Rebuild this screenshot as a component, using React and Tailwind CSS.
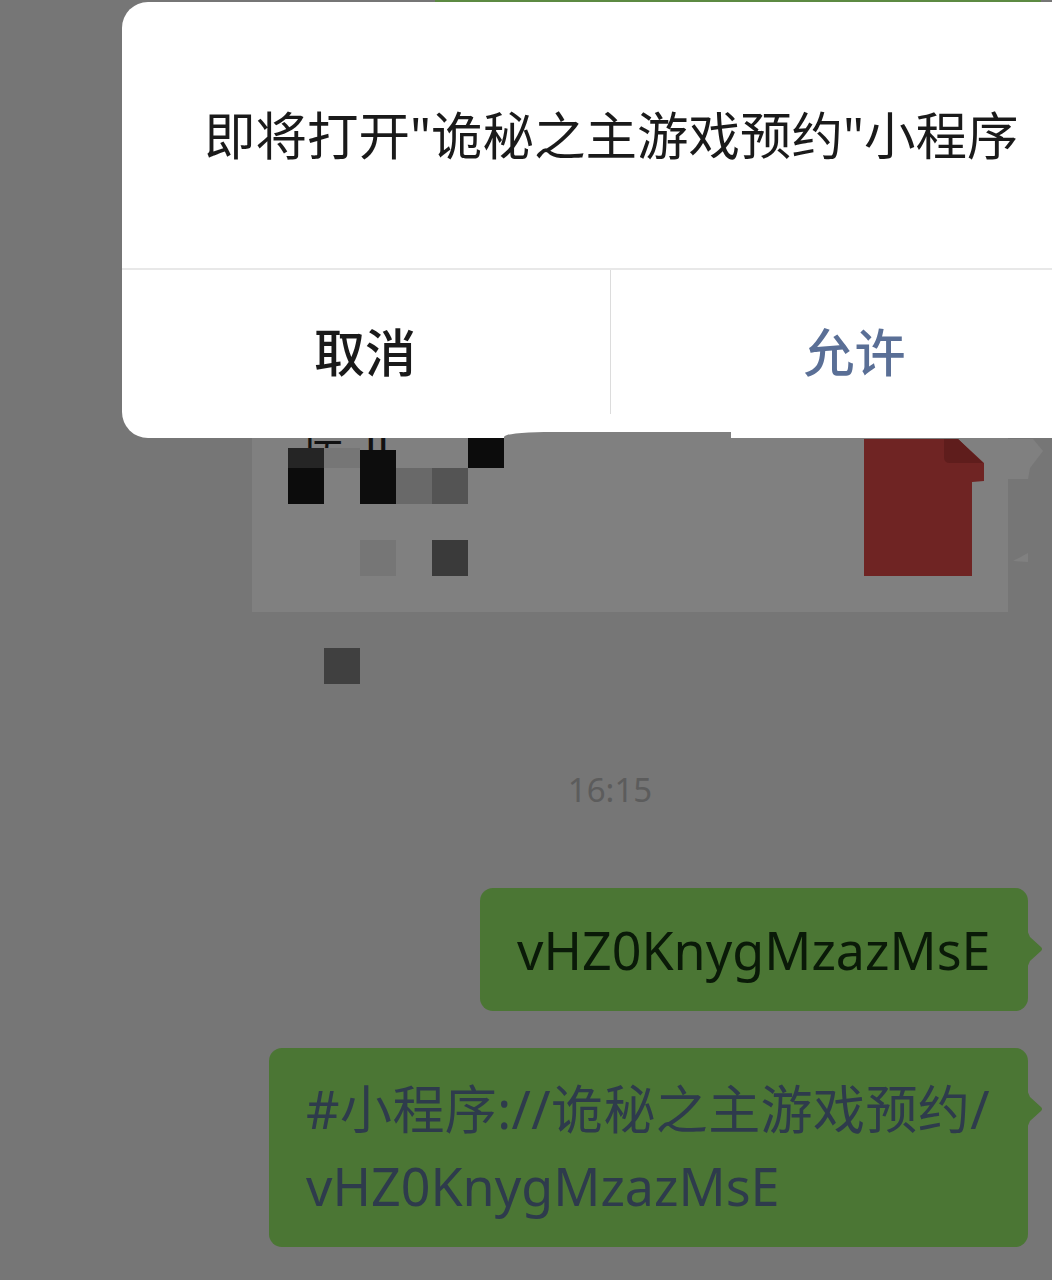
const font = "font-['Noto_Sans','Noto_Sans_CJK_SC',sans-serif]";

// mosaic over the blurred file name, 36px cells. h is the visible part of a cell.
const mosaic = [
  [{ color: "#252525", h: 20 }, { color: "#767676", h: 20 }, { color: "#0d0d0d", h: 18 }, null, null, { color: "#0c0c0c", h: 30 }],
  [{ color: "#0c0c0c" }, null, { color: "#0d0d0d" }, { color: "#696969" }, { color: "#545454" }, null],
  [null, null, null, null, null, null],
  [null, null, { color: "#767676" }, null, { color: "#3a3a3a" }, null],
];

function Tail() {
  return (
    <svg className="absolute left-full top-[41px] ml-[-1px]" width="16" height="40" viewBox="0 0 16 40">
      <path d="M0 1 L3 8 L14 18 Q16 20 14 22 L3 32 L0 39 Z" fill="#4b7634" />
    </svg>
  );
}

function FileIcon() {
  return (
    <svg className="absolute left-[612px] top-[99px]" width="120" height="137" viewBox="0 0 120 137">
      <path d="M0 0 H94 L120 24 V42 L108 43 V137 H0 Z" fill="#6f2423" />
      <path d="M80 0 H94 L119 24 H86 Q80 24 80 18 Z" fill="#5f1d1c" />
    </svg>
  );
}

export default function App() {
  return (
    <div className={`relative h-[1280px] w-[1052px] overflow-hidden bg-[#767676] ${font}`}>
      <div className="ml-[435px] h-[3px] w-[606px] bg-[#5c8a42]" />

      {/* blurred file card, mostly behind the dialog */}
      <div className="relative ml-[252px] mt-[337px] h-[272px] w-[756px] bg-[#808080] pl-[36px] pt-[92px]">
        <p className="absolute left-[51px] top-[84px] whitespace-nowrap text-[42px] leading-[50px] text-[#111]">
          庑 Ⅱ
        </p>
        <FileIcon />
        <svg className="absolute left-full top-[99px]" width="36" height="130" viewBox="0 0 36 130">
          <path d="M0 0 H25 L35 12 L22 29 L20 40 H0 Z" fill="#808080" />
          <path d="M5 122 L20 114 V123 Z" fill="#808080" />
        </svg>
        <div className="relative grid grid-cols-[repeat(6,36px)] auto-rows-[36px] items-end">
          {mosaic.flat().map((cell, i) =>
            cell ? (
              <div key={i} style={{ background: cell.color, height: cell.h || 36 }} />
            ) : (
              <div key={i} />
            )
          )}
        </div>
      </div>

      <div className="ml-[324px] mt-[36px] h-9 w-9 bg-[#404040]" />

      <p className="mt-[78px] pl-[168px] text-center text-[33px] leading-[56px] text-[#5c5c5c]">16:15</p>

      <div className="mt-[70px] flex flex-col items-end gap-[37px] pr-[24px]">
        <div className="relative flex h-[123px] w-[548px] items-center rounded-[13px] bg-[#4b7634] pl-[37px]">
          <span className="text-[52px] leading-[78px] text-[#0a1a08]">vHZ0KnygMzazMsE</span>
          <Tail />
        </div>
        <div className="relative h-[199px] w-[759px] rounded-[13px] bg-[#4b7634] py-[22px] pl-[37px] text-[52px] leading-[77px] text-[#2e3b4c]">
          <p className="tracking-[0.4px]">#小程序://诡秘之主游戏预约/</p>
          <p>vHZ0KnygMzazMsE</p>
          <Tail />
        </div>
      </div>

      {/* dialog */}
      <div className="absolute left-[122px] top-[2px] z-10 w-[978px] rounded-[26px] bg-white text-[#1a1a1a]">
        <div className="flex h-[268px] items-center border-b-2 border-[#e8e8e8] pl-[82px]">
          <p className="whitespace-nowrap text-[51.5px] leading-[70px]">即将打开"诡秘之主游戏预约"小程序</p>
        </div>
        <div className="flex h-[168px] text-[51px]">
          <button className="flex h-full w-[488px] items-center justify-center pb-[3px] pr-[2px] font-medium">取消</button>
          <div className="h-[144px] w-px bg-[#dcdcdc]" />
          <button className="flex h-full flex-1 items-center justify-center pb-[3px] pr-[2px] font-medium text-[#5a6f96]">允许</button>
        </div>
      </div>

      {/* the reference has a torn bottom edge on the dialog here */}
      <div className="absolute left-[504px] top-[432px] z-20 h-[7px] w-[227px] rounded-tl-[40px_5px] bg-[#808080]" />
    </div>
  );
}
